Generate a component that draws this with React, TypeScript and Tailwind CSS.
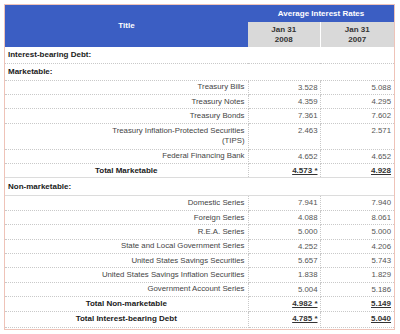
import React from "react";

type Row =
    | {kind: "section"; label: string; h: string}
    | {kind: "item"; label: React.ReactNode; a: string; b: string; h: string}
    | {kind: "total"; label: string; a: string; b: string; h: string};

const rows: Row[] = [
    {kind: "section", label: "Interest-bearing Debt:", h: "h-[16px]"},
    {kind: "section", label: "Marketable:", h: "h-[17px]"},
    {kind: "item", label: "Treasury Bills", a: "3.528", b: "5.088", h: "h-[14.4px]"},
    {kind: "item", label: "Treasury Notes", a: "4.359", b: "4.295", h: "h-[14.4px]"},
    {kind: "item", label: "Treasury Bonds", a: "7.361", b: "7.602", h: "h-[14.4px]"},
    {
        kind: "item",
        label: <>Treasury Inflation-Protected Securities<br/>(TIPS)</>,
        a: "2.463",
        b: "2.571",
        h: "h-[26px]",
    },
    {kind: "item", label: "Federal Financing Bank", a: "4.652", b: "4.652", h: "h-[14.4px]"},
    {kind: "total", label: "Total Marketable", a: "4.573 *", b: "4.928", h: "h-[14.4px]"},
    {kind: "section", label: "Non-marketable:", h: "h-[18px]"},
    {kind: "item", label: "Domestic Series", a: "7.941", b: "7.940", h: "h-[14.4px]"},
    {kind: "item", label: "Foreign Series", a: "4.088", b: "8.061", h: "h-[14.4px]"},
    {kind: "item", label: "R.E.A. Series", a: "5.000", b: "5.000", h: "h-[14.4px]"},
    {kind: "item", label: "State and Local Government Series", a: "4.252", b: "4.206", h: "h-[14.4px]"},
    {kind: "item", label: "United States Savings Securities", a: "5.657", b: "5.743", h: "h-[14.4px]"},
    {kind: "item", label: "United States Savings Inflation Securities", a: "1.838", b: "1.829", h: "h-[14.4px]"},
    {kind: "item", label: "Government Account Series", a: "5.004", b: "5.186", h: "h-[14.4px]"},
    {kind: "total", label: "Total Non-marketable", a: "4.982 *", b: "5.149", h: "h-[14.4px]"},
    {kind: "total", label: "Total Interest-bearing Debt", a: "4.785 *", b: "5.040", h: "h-[16.8px]"},
];

const cellBorder = "border-b border-dotted border-[#c9c9c9]";
const colBorder = "border-r border-dotted border-[#c9c9c9]";

export default function App() {
    return (
        <div className="w-[400px] h-[334px] bg-white pt-[4px] pl-[4px]" style={{fontFamily: '"Liberation Sans", Arial, sans-serif'}}>
            <div className="w-[391px] h-[326px] border border-[#efc3b8] overflow-hidden">
                <table className="w-[389px] border-collapse table-fixed text-[7.8px] leading-[10px]">
                    <colgroup>
                        <col className="w-[243px]"/>
                        <col className="w-[72px]"/>
                        <col className="w-[74px]"/>
                    </colgroup>
                    <thead>
                        <tr className="h-[17px]">
                            <th rowSpan={2} className="bg-[#3b5ec3] text-white font-bold text-[8px] text-center align-middle">
                                Title
                            </th>
                            <th colSpan={2} className="bg-[#3b5ec3] text-white font-bold text-[8px] text-center align-middle">
                                Average Interest Rates
                            </th>
                        </tr>
                        <tr className="h-[25px]">
                            <th className="bg-[#d9d9d9] text-[#333] font-bold text-[8px] leading-[10px] text-center border-r border-white">
                                Jan 31<br/>2008
                            </th>
                            <th className="bg-[#d9d9d9] text-[#333] font-bold text-[8px] leading-[10px] text-center">
                                Jan 31<br/>2007
                            </th>
                        </tr>
                    </thead>
                    <tbody>
                        {rows.map((r, i) => {
                            if (r.kind === "section") {
                                const solid = r.label === "Non-marketable:";
                                return (
                                    <tr key={i} className={r.h}>
                                        <td
                                            colSpan={3}
                                            className={
                                                solid
                                                    ? "border-y border-solid border-[#dcdcdc] pl-[3px] font-bold text-[8px] text-[#1a1a1a]"
                                                    : `${cellBorder} pl-[3px] font-bold text-[8px] text-[#1a1a1a]`
                                            }
                                        >
                                            {r.label}
                                        </td>
                                    </tr>
                                );
                            }
                            if (r.kind === "total") {
                                return (
                                    <tr key={i} className={r.h}>
                                        <td className={`${cellBorder} ${colBorder} text-center font-bold text-[8px] text-[#1a1a1a]`}>
                                            {r.label}
                                        </td>
                                        <td className={`${cellBorder} ${colBorder} text-right pr-[2px] font-bold text-[8px] text-[#333]`}>
                                            <span className="underline underline-offset-1">{r.a}</span>
                                        </td>
                                        <td className={`${cellBorder} text-right pr-[3px] font-bold text-[8px] text-[#333]`}>
                                            <span className="underline underline-offset-1">{r.b}</span>
                                        </td>
                                    </tr>
                                );
                            }
                            return (
                                <tr key={i} className={r.h}>
                                    <td className={`${cellBorder} ${colBorder} text-right pr-[3px] text-[#444] align-middle`}>
                                        {r.label}
                                    </td>
                                    <td className={`${cellBorder} ${colBorder} text-right pr-[2px] text-[#555] align-top pt-[2px]`}>
                                        {r.a}
                                    </td>
                                    <td className={`${cellBorder} text-right pr-[3px] text-[#555] align-top pt-[2px]`}>
                                        {r.b}
                                    </td>
                                </tr>
                            );
                        })}
                    </tbody>
                </table>
            </div>
        </div>
    );
}
